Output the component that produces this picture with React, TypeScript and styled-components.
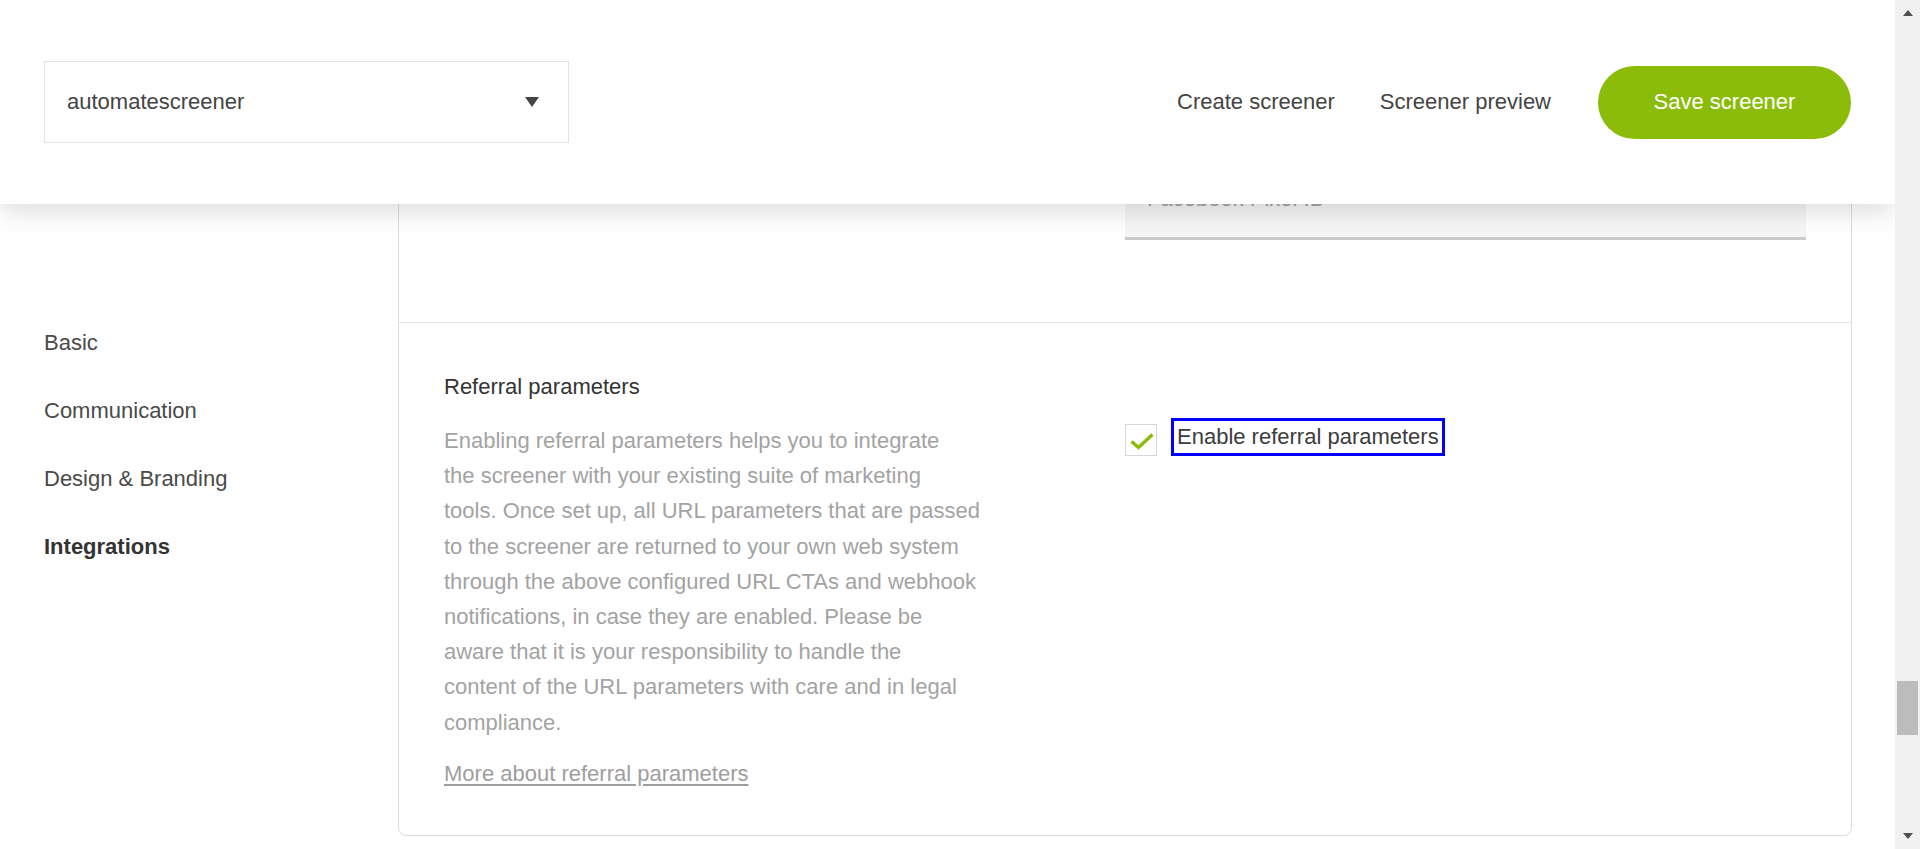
import React from 'react';
import styled, { createGlobalStyle } from 'styled-components';

const GlobalStyle = createGlobalStyle`
  html, body {
    margin: 0;
    padding: 0;
    height: 100%;
    overflow: hidden;
    background: #fff;
  }
  body {
    font-family: "Liberation Sans", Arial, sans-serif;
    font-size: 22px;
    color: #444;
  }
  #root {
    height: 100%;
  }
  * {
    box-sizing: border-box;
  }
`;

const StyledPage = styled.div`
  display: flex;
  width: 1920px;
  height: 849px;
`;

const StyledViewport = styled.div`
  position: relative;
  flex: 1;
  overflow: hidden;
`;

/* header is fixed over the scrolled content */
const StyledHeader = styled.header`
  position: absolute;
  z-index: 5;
  top: 0;
  left: 0;
  right: 0;
  height: 204px;
  display: flex;
  align-items: center;
  padding: 0 44px;
  background: #fff;
  box-shadow: 0 6px 26px rgba(0, 0, 0, 0.15);
`;

const StyledSelect = styled.div`
  width: 525px;
  height: 82px;
  display: flex;
  align-items: center;
  justify-content: space-between;
  padding: 0 29px 0 22px;
  border: 1px solid #e2e2e2;
  color: #444;
  line-height: 1;
`;

const StyledCaret = styled.span`
  width: 0;
  height: 0;
  border-left: 7.5px solid transparent;
  border-right: 7.5px solid transparent;
  border-top: 10px solid #444;
`;

const StyledHeaderNav = styled.nav`
  margin-left: auto;
  display: flex;
  align-items: center;
  gap: 45px;
`;

const StyledHeaderLink = styled.a`
  color: #444;
  text-decoration: none;
  white-space: nowrap;
`;

const StyledSaveButton = styled.button`
  margin-left: 2px;
  width: 253px;
  height: 73px;
  border: none;
  border-radius: 37px;
  background: #8cbc0a;
  color: #fff;
  font-family: inherit;
  font-size: 22px;
`;

const StyledBody = styled.div`
  display: flex;
  align-items: flex-start;
  margin-top: -80px;
`;

const StyledSidebar = styled.aside`
  width: 398px;
  flex-shrink: 0;
  padding: 406px 0 0 44px;
  display: flex;
  flex-direction: column;
  gap: 34px;
`;

const StyledNavItem = styled.a<{ $active?: boolean }>`
  line-height: 34px;
  color: ${({ $active }) => ($active ? '#333' : '#4a4a4a')};
  font-weight: ${({ $active }) => ($active ? 700 : 400)};
  text-decoration: none;
`;

const StyledCard = styled.div`
  width: 1454px;
  flex-shrink: 0;
  border: 1px solid #dcdcdc;
  border-radius: 0 0 8px 8px;
  background: #fff;
`;

const StyledSection = styled.section<{ $first?: boolean }>`
  display: grid;
  grid-template-columns: 1fr 1fr;
  padding: ${({ $first }) => ($first ? '89px 45px 82px' : '47px 45px 45px')};
  border-top: ${({ $first }) => ($first ? 'none' : '1px solid #e6e6e6')};
`;

const StyledColumn = styled.div<{ $right?: boolean }>`
  display: flex;
  flex-direction: column;
  align-items: flex-start;
  padding-top: ${({ $right }) => ($right ? '48px' : '0')};
`;

const StyledTitle = styled.h3`
  margin: 0;
  font-size: 22px;
  font-weight: 400;
  line-height: 33px;
  color: #333;
`;

const StyledDescription = styled.p`
  margin: 20px 0 0;
  line-height: 35.2px;
  color: #a3a3a3;
  white-space: nowrap;

  span {
    display: block;
  }
`;

const StyledMoreLink = styled.a`
  margin-top: 17px;
  line-height: 33px;
  color: #9e9e9e;
  text-decoration: underline;
  text-underline-offset: 3px;
`;

const StyledCheckRow = styled.div`
  display: flex;
  align-items: flex-end;
  gap: 14px;
`;

const StyledCheckbox = styled.span`
  width: 32px;
  height: 32px;
  flex-shrink: 0;
  border: 1px solid #d6d6d6;
  background: #fff;
  display: flex;
`;

const StyledCheckLabel = styled.label<{ $focused?: boolean }>`
  padding: 0 3px;
  line-height: 32px;
  color: #3c3c3c;
  border: 3px solid ${({ $focused }) => ($focused ? '#0000ff' : 'transparent')};
  white-space: nowrap;
`;

const StyledInput = styled.div`
  margin-top: 64px;
  width: 100%;
  height: 80px;
  display: flex;
  align-items: center;
  padding: 0 22px;
  background: #f5f5f5;
  border-bottom: 3px solid #cacaca;
  color: #a0a0a0;
`;

const StyledScrollTrack = styled.div`
  width: 25px;
  flex-shrink: 0;
  background: #f1f1f1;
  display: flex;
  flex-direction: column;
  align-items: center;
`;

const StyledArrow = styled.span<{ $down?: boolean }>`
  width: 0;
  height: 0;
  border-left: 5.5px solid transparent;
  border-right: 5.5px solid transparent;
  ${({ $down }) =>
    $down
      ? 'border-top: 6px solid #505050; margin: auto 0 10px;'
      : 'border-bottom: 6px solid #505050; margin-top: 10px;'}
`;

const StyledThumb = styled.span`
  margin-top: 665px;
  width: 21px;
  height: 54px;
  background: #bcbcbc;
`;

const Check = () => (
  <svg width="30" height="30" viewBox="0 0 30 30">
    <polyline
      points="5.5,16.5 12.5,22.5 26.5,9.5"
      fill="none"
      stroke="#8cbc0a"
      strokeWidth="3.4"
    />
  </svg>
);

const descriptionLines = [
  'Enabling referral parameters helps you to integrate',
  'the screener with your existing suite of marketing',
  'tools. Once set up, all URL parameters that are passed',
  'to the screener are returned to your own web system',
  'through the above configured URL CTAs and webhook',
  'notifications, in case they are enabled. Please be',
  'aware that it is your responsibility to handle the',
  'content of the URL parameters with care and in legal',
  'compliance.',
];

const navItems = ['Basic', 'Communication', 'Design & Branding', 'Integrations'];

export default function App() {
  return (
    <>
      <GlobalStyle />
      <StyledPage>
        <StyledViewport>
          <StyledBody>
            <StyledSidebar>
              {navItems.map((item) => (
                <StyledNavItem key={item} $active={item === 'Integrations'}>
                  {item}
                </StyledNavItem>
              ))}
            </StyledSidebar>

            <StyledCard>
              <StyledSection $first>
                <StyledColumn>
                  <StyledTitle>Tracking</StyledTitle>
                  <StyledDescription>
                    <span>Connect the screener with your Facebook Pixel</span>
                    <span>to track conversions of your candidates.</span>
                  </StyledDescription>
                </StyledColumn>
                <StyledColumn $right>
                  <StyledCheckRow>
                    <StyledCheckbox>
                      <Check />
                    </StyledCheckbox>
                    <StyledCheckLabel>Enable Facebook Pixel</StyledCheckLabel>
                  </StyledCheckRow>
                  <StyledInput>Facebook Pixel ID</StyledInput>
                </StyledColumn>
              </StyledSection>

              <StyledSection>
                <StyledColumn>
                  <StyledTitle>Referral parameters</StyledTitle>
                  <StyledDescription>
                    {descriptionLines.map((line) => (
                      <span key={line}>{line}</span>
                    ))}
                  </StyledDescription>
                  <StyledMoreLink>More about referral parameters</StyledMoreLink>
                </StyledColumn>
                <StyledColumn $right>
                  <StyledCheckRow>
                    <StyledCheckbox>
                      <Check />
                    </StyledCheckbox>
                    <StyledCheckLabel $focused>Enable referral parameters</StyledCheckLabel>
                  </StyledCheckRow>
                </StyledColumn>
              </StyledSection>
            </StyledCard>
          </StyledBody>

          <StyledHeader>
            <StyledSelect>
              <span>automatescreener</span>
              <StyledCaret />
            </StyledSelect>
            <StyledHeaderNav>
              <StyledHeaderLink>Create screener</StyledHeaderLink>
              <StyledHeaderLink>Screener preview</StyledHeaderLink>
              <StyledSaveButton>Save screener</StyledSaveButton>
            </StyledHeaderNav>
          </StyledHeader>
        </StyledViewport>

        <StyledScrollTrack>
          <StyledArrow />
          <StyledThumb />
          <StyledArrow $down />
        </StyledScrollTrack>
      </StyledPage>
    </>
  );
}
